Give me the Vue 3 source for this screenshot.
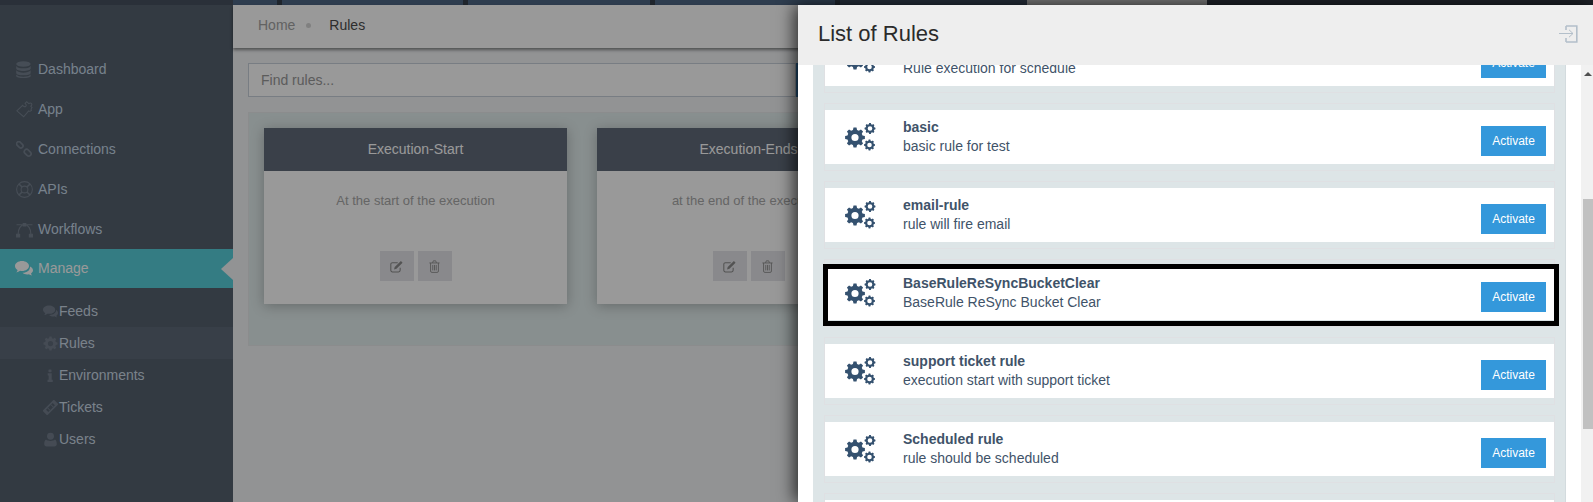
<script setup>
function gear(cx, cy, ro, ri, hole, teeth) {
  let d = ''
  const step = (Math.PI * 2) / teeth
  for (let i = 0; i < teeth; i++) {
    const a = i * step - Math.PI / 2
    const w = step * 0.24
    const pts = [
      [ri, a - step * 0.34],
      [ro, a - w * 0.8],
      [ro, a + w * 0.8],
      [ri, a + step * 0.34]
    ]
    for (const [r, t] of pts) {
      d += (d ? 'L' : 'M') + (cx + r * Math.cos(t)).toFixed(2) + ' ' + (cy + r * Math.sin(t)).toFixed(2)
    }
  }
  d += 'Z'
  d += `M${cx - hole} ${cy}a${hole} ${hole} 0 1 0 ${hole * 2} 0a${hole} ${hole} 0 1 0 ${-hole * 2} 0Z`
  return d
}

const cogs = gear(10, 14.5, 10, 7.8, 3.6, 8) + gear(25, 5.5, 5.5, 4.4, 2.3, 8) + gear(24.5, 22, 5.5, 4.4, 2.3, 8)
const ruleGear = gear(8, 8, 7.6, 5.9, 2.8, 8)

const mainNav = [
  { label: 'Dashboard', icon: 'database' },
  { label: 'App', icon: 'puzzle' },
  { label: 'Connections', icon: 'link' },
  { label: 'APIs', icon: 'ring' },
  { label: 'Workflows', icon: 'bezier' }
]
const subNav = [
  { label: 'Feeds', icon: 'comments' },
  { label: 'Rules', icon: 'gear', active: true },
  { label: 'Environments', icon: 'info' },
  { label: 'Tickets', icon: 'ticket' },
  { label: 'Users', icon: 'user' }
]
const execCards = [
  { title: 'Execution-Start', text: 'At the start of the execution' },
  { title: 'Execution-Ends', text: 'at the end of the execution' }
]
const rules = [
  { name: '', desc: 'Rule execution for schedule' },
  { name: 'basic', desc: 'basic rule for test' },
  { name: 'email-rule', desc: 'rule will fire email' },
  { name: 'BaseRuleReSyncBucketClear', desc: 'BaseRule ReSync Bucket Clear', marked: true },
  { name: 'support ticket rule', desc: 'execution start with support ticket' },
  { name: 'Scheduled rule', desc: 'rule should be scheduled' },
  { name: '', desc: '', empty: true }
]
const tabs = ['t-a', 't-b', 't-sep', 't-c', 't-sep', 't-d', 't-sep', 't-e', 't-sep', 't-f', 't-light', 't-g']
</script>

<template>
  <div class="page">
    <div class="strip">
      <span v-for="(t, i) in tabs" :key="i" :class="t"></span>
    </div>
    <div class="shell">
      <aside class="side">
        <nav class="main-nav">
          <a v-for="n in mainNav" :key="n.label" class="nav-row">
            <span class="nav-ico"><svg width="17" height="17" viewBox="0 0 16 16">
              <g v-if="n.icon === 'database'" fill="currentColor">
                <ellipse cx="7" cy="2.8" rx="6.8" ry="2.6" />
                <path d="M.2 4.6C1.4 6.3 4 6.9 7 6.9s5.600-.6 6.800-2.300V7C13.800 8.600 10.800 9.300 7 9.300S.2 8.600.2 7Z" />
                <path d="M.2 8.700C1.400 10.300 4 11 7 11s5.600-.7 6.800-2.300v2.500C13.800 12.800 10.800 13.500 7 13.500S.2 12.800.2 11.200Z" />
                <path d="M.2 12.700C1.400 14.100 4 14.800 7 14.800s5.600-.7 6.800-2.100V14c0 1.300-3 2-6.800 2S.2 15.300.2 14Z" />
              </g>
              <path v-else-if="n.icon === 'puzzle'" fill="none" stroke="currentColor" stroke-width="1" d="M.8 9.200 6.200 4c.9 1.400 2.300 1.700 3 1 .8-.8.400-1.900-.6-2.800l1.500-1.500 2 1.800c.9-.8 2-.7 2.500-.1.600.7.300 1.800-.7 2.500l1.200 1.400c-.9.700-1.200 1.800-.5 2.500-.8.900-2 1-2.700.6l-4.700 5.400Z" />
              <g v-else-if="n.icon === 'link'" fill="none" stroke="currentColor" stroke-width="1.600">
                <rect x="-3.400" y="-2" width="6.800" height="4" rx="2" transform="translate(3.600 3.600) rotate(45)" />
                <rect x="-3.600" y="-2.200" width="7.200" height="4.400" rx="2.200" transform="translate(11 11) rotate(45)" />
              </g>
              <g v-else-if="n.icon === 'ring'" fill="none" stroke="currentColor" stroke-width="1">
                <circle cx="8" cy="8" r="7.400" />
                <circle cx="8" cy="8" r="3.200" />
                <path stroke-width="1.500" d="M2.800 2.800l2.900 2.900M13.200 2.800l-2.900 2.900M2.800 13.200l2.900-2.900M13.200 13.200l-2.900-2.900" />
              </g>
              <g v-else fill="none" stroke="currentColor" stroke-width="1.100">
                <path d="M2 12.500C2 7 4.500 3.500 8 3.500s6 3.500 6 9M.5 3.500h15" />
                <path fill="currentColor" d="M.6 12.500h2.800v2.400H.6zM12.600 12.500h2.800v2.400h-2.800zM6.800 2.400h2.400v2.200H6.800z" />
              </g>
            </svg></span>
            <span>{{ n.label }}</span>
          </a>
          <a class="nav-row manage">
            <span class="nav-ico manage-ico"><svg width="18" height="16" viewBox="0 0 18 16" fill="currentColor">
              <path d="M7 1c3.900 0 7 2.200 7 5s-3.100 5-7 5c-.7 0-1.300-.1-1.900-.2C4 11.700 2.700 12.200 1.300 12.400c.7-.7 1.200-1.500 1.300-2.400C1 9.100 0 7.600 0 6c0-2.800 3.100-5 7-5Z" />
              <path d="M15 6.500c1.800.8 3 2.200 3 3.800 0 1.300-.8 2.400-2 3.200.100.800.500 1.500 1.100 2.100-1.200-.2-2.300-.6-3.300-1.300-.5.100-1 .2-1.600.2-1.900 0-3.600-.6-4.700-1.700 4.200.1 7.800-2.400 7.500-6.300Z" />
            </svg></span>
            <span>Manage</span>
            <i class="notch"></i>
          </a>
        </nav>
        <nav class="sub-nav">
          <a v-for="n in subNav" :key="n.label" class="sub-row" :class="{ on: n.active }">
            <span class="sub-ico"><svg width="15" height="15" viewBox="0 0 16 16">
              <g v-if="n.icon === 'comments'" fill="currentColor">
                <path d="M6.500 1.500c3.500 0 6.500 1.900 6.500 4.500s-3 4.500-6.500 4.500c-.6 0-1.200-.1-1.800-.2-1 .8-2.200 1.300-3.400 1.400.6-.7 1-1.400 1.100-2.200C.9 8.700 0 7.400 0 6c0-2.600 2.900-4.500 6.500-4.500Z" />
                <path d="M14 6.500c1.300.7 2 1.800 2 3 0 1.200-.7 2.200-1.800 2.900.1.700.4 1.400 1 1.900-1.100-.1-2.100-.6-3-1.200-2 .5-4.300 0-5.600-1.400 3.800.1 7.600-1.900 7.400-5.200Z" />
              </g>
              <path v-else-if="n.icon === 'gear'" fill="currentColor" fill-rule="evenodd" :d="ruleGear" />
              <g v-else-if="n.icon === 'info'" fill="currentColor">
                <rect x="5.800" y="1.500" width="3.300" height="3" rx=".7" />
                <path d="M5 5.500h4.300v7h1.100V15H4.800v-2.500H6V8H5Z" />
              </g>
              <g v-else-if="n.icon === 'ticket'" fill="currentColor" transform="rotate(-45 8 8)">
                <path fill-rule="evenodd" d="M-.5 4.500h17v7h-17ZM3 6.300v3.400h10V6.300Z" />
                <rect x="5" y="6.300" width="1" height="3.400" />
                <rect x="10" y="6.300" width="1" height="3.400" />
              </g>
              <g v-else fill="currentColor">
                <circle cx="8" cy="4.600" r="3.700" />
                <path d="M3.200 8c1.300 1.100 3 1.500 4.800 1.500s3.500-.4 4.800-1.500c1.300.8 1.900 2.500 1.900 4.800 0 1.700-1 2.700-2.600 2.700H3.900c-1.600 0-2.600-1-2.600-2.700 0-2.300.6-4 1.900-4.800Z" />
              </g>
            </svg></span>
            <span>{{ n.label }}</span>
          </a>
        </nav>
      </aside>
      <main class="content">
        <div class="crumbs">
          <span class="home">Home</span>
          <i class="dot"></i>
          <span class="cur">Rules</span>
        </div>
        <div class="search">
          <input class="find" placeholder="Find rules..." />
          <button class="go"></button>
        </div>
        <section class="board">
          <article v-for="c in execCards" :key="c.title" class="exec">
            <header class="exec-head">{{ c.title }}</header>
            <p class="exec-text">{{ c.text }}</p>
            <div class="exec-btns">
              <button class="tool"><svg width="13" height="13" viewBox="0 0 16 16" fill="none" stroke="currentColor" stroke-width="1.300">
                <path d="M12.500 9.500v3.200a2 2 0 0 1-2 2H3a2 2 0 0 1-2-2V5.300a2 2 0 0 1 2-2h6.500" />
                <path fill="currentColor" stroke="none" d="M13.400 1.200 15.500 3.300 8 10.800l-3 .8.800-3Z" />
              </svg></button>
              <button class="tool"><svg width="11" height="13" viewBox="0 0 14 16" fill="none" stroke="currentColor" stroke-width="1.100">
                <path d="M.5 3.500h13M2 3.500v10.300A1.700 1.700 0 0 0 3.700 15.500h6.600a1.700 1.700 0 0 0 1.700-1.700V3.500M4.500 3.500l1-2.700h3l1 2.700M4.800 6v7M7 6v7M9.200 6v7" />
              </svg></button>
            </div>
          </article>
        </section>
      </main>
    </div>
    <div class="veil"></div>
    <div class="panel">
      <header class="panel-head">
        <h2 class="panel-title">List of Rules</h2>
        <svg class="exit" width="19" height="18" viewBox="0 0 19 18" fill="none" stroke="#b3bfca">
          <path stroke-width="1.600" d="M7 1h10.800v16H7M7 1v4M7 13v4" />
          <path stroke-width="1" d="M0 8.500h14M10 4.800l4 3.700-4 3.700" />
        </svg>
      </header>
      <div class="panel-body">
        <div class="scroller">
          <ul class="rule-list">
            <li v-for="(r, i) in rules" :key="i" class="rule">
              <div class="rule-inner">
                <svg class="cogs" width="31" height="28" viewBox="0 0 31 28"><path fill="#34516f" fill-rule="evenodd" :d="cogs" /></svg>
                <div class="rule-text">
                  <div class="rule-name">{{ r.name }}</div>
                  <div class="rule-desc">{{ r.desc }}</div>
                </div>
                <button v-if="!r.empty" class="activate">Activate</button>
              </div>
              <i v-if="r.marked" class="mark"></i>
            </li>
          </ul>
        </div>
        <div class="scrollbar">
          <i class="arrow"></i>
          <i class="thumb"></i>
        </div>
      </div>
    </div>
  </div>
</template>

<style>
html, body { margin: 0; overflow: hidden; }
</style>

<style scoped>
.page {
  position: relative;
  width: 1593px;
  height: 502px;
  overflow: hidden;
  display: flex;
  flex-direction: column;
  font-family: "Liberation Sans", Arial, sans-serif;
  font-size: 14px;
  background: #f3f5f7;
}
.strip { display: flex; height: 5px; flex: none; }
.strip span { display: block; height: 5px; }
.t-a { width: 233px; background: #46505f; }
.t-b { width: 44px; background: #4e6684; }
.t-sep { width: 5px; background: #353f4b; }
.t-c { width: 181px; background: #4e6684; }
.t-d { width: 182px; background: #4e6684; }
.t-e { width: 180px; background: #4e6684; }
.t-f { width: 187px; background: #3f4e62; }
.t-light { width: 180px; background: #c8c8c8; }
.t-g { flex: 1; background: #323944; }

.shell { flex: 1; display: flex; min-height: 0; }
.side { width: 233px; flex: none; background: #55616e; padding-top: 44px; box-sizing: border-box; }
.nav-row {
  position: relative;
  display: flex;
  align-items: center;
  height: 40px;
  padding-left: 16px;
  color: #c6d8e8;
}
.nav-ico { width: 22px; flex: none; display: flex; color: #76818f; }
.manage { height: 39px; box-sizing: border-box; padding-bottom: 2px; background: #57cfdb; color: #fff; }
.manage-ico { color: #fff; margin-left: -1px; width: 23px; }
.notch {
  position: absolute;
  right: 0;
  top: 9px;
  width: 0;
  height: 0;
  border-top: 11px solid transparent;
  border-bottom: 11px solid transparent;
  border-right: 12px solid #f3f5f7;
}
.sub-nav { padding-top: 7px; }
.sub-row {
  display: flex;
  align-items: center;
  height: 32px;
  padding-left: 43px;
  color: #ccd9e6;
}
.sub-row.on { background: #5e6a78; }
.sub-ico { width: 16px; flex: none; display: flex; color: #737e8d; }

.content { flex: 1; min-width: 0; display: flex; flex-direction: column; }
.crumbs {
  height: 43px;
  flex: none;
  box-sizing: border-box;
  background: #fff;
  display: flex;
  align-items: center;
  padding: 0 0 3px 25px;
  box-shadow: 0 2px 3px rgba(0, 0, 0, .45);
  position: relative;
}
.home { color: #a3a3a3; }
.dot { width: 5px; height: 5px; border-radius: 50%; background: #d6d6d6; margin: 0 18px 0 11px; }
.cur { color: #4c4c4c; }
.search { display: flex; margin: 15px 0 0 15px; height: 34px; flex: none; }
.find {
  flex: none;
  width: 548px;
  box-sizing: border-box;
  border: 1px solid #c8d0da;
  background: #fff;
  padding: 0 12px;
  font: 14px "Liberation Sans", Arial, sans-serif;
  outline: none;
}
.find::placeholder { color: #999; opacity: 1; }
.go { flex: 1; border: 0; background: #3a7fb8; padding: 0; }
.board {
  margin: 15px 0 0 15px;
  height: 234px;
  box-sizing: border-box;
  flex: none;
  background: #e3eeee;
  border-top: 1px solid #e8eaec;
  border-bottom: 1px solid #e8eaec;
  border-left: 1px solid #e8eaec;
  padding: 15px;
  display: flex;
  gap: 30px;
}
.exec {
  width: 303px;
  height: 176px;
  flex: none;
  background: #fff;
  box-shadow: 0 2px 12px rgba(0, 0, 0, .25);
  display: flex;
  flex-direction: column;
}
.exec-head {
  height: 43px;
  flex: none;
  box-sizing: border-box;
  padding-bottom: 2px;
  display: flex;
  align-items: center;
  justify-content: center;
  background: #616b7b;
  color: #fff;
}
.exec-text { margin: 0; padding-top: 22px; text-align: center; font-size: 13px; line-height: 16px; color: #a8a8a8; }
.exec-btns { margin-top: 42px; display: flex; justify-content: center; gap: 4px; }
.tool {
  width: 34px;
  height: 30px;
  padding: 0;
  border: 0;
  background: #e5e5e9;
  color: #8a8a8a;
  display: flex;
  align-items: center;
  justify-content: center;
}
.veil { position: absolute; inset: 0; background: rgba(0, 0, 0, .4); }

.panel {
  position: absolute;
  left: 798px;
  right: 0;
  top: 5px;
  bottom: 0;
  background: #fff;
  box-shadow: -4px 0 16px rgba(0, 0, 0, .7);
  display: flex;
  flex-direction: column;
}
.panel-head {
  height: 60px;
  flex: none;
  background: #eee;
  display: flex;
  align-items: center;
  justify-content: space-between;
  padding: 0 15px 0 20px;
  position: relative;
  z-index: 1;
}
.panel-title { margin: 0; font-size: 22px; font-weight: 400; color: #2b2b2b; position: relative; top: -1px; }
.exit { position: relative; top: -1px; }
.panel-body { flex: 1; min-height: 0; display: flex; overflow: hidden; }
.scroller { flex: 1; min-width: 0; padding: 0 15px; }
.rule-list {
  list-style: none;
  margin: -40px 0 0;
  padding: 0 10px 0 11px;
  background: #dde5e7;
  border-right: 1px solid #d3dbde;
  box-sizing: border-box;
}
.rule {
  position: relative;
  height: 68px;
  box-sizing: border-box;
  margin-bottom: 10px;
  border: 1px solid #dfe0e3;
  padding: 6px 0;
}
.rule-inner {
  height: 54px;
  background: #fff;
  display: flex;
  align-items: center;
  padding: 0 8px 0 20px;
}
.cogs { flex: none; margin-right: 27px; }
.rule-text { flex: 1; min-width: 0; color: #3f5369; line-height: 19px; }
.rule-name { font-weight: 700; height: 19px; }
.rule-desc { height: 19px; }
.activate {
  width: 65px;
  height: 30px;
  margin-top: 8px;
  padding: 0;
  border: 0;
  background: #3498db;
  color: #fff;
  font: 12px "Liberation Sans", Arial, sans-serif;
}
.mark {
  position: absolute;
  left: -2px;
  right: -5px;
  top: 4px;
  height: 62px;
  box-sizing: border-box;
  border: 5px solid #000;
}
.scrollbar {
  width: 12px;
  flex: none;
  background: #f1f1f1;
  padding-left: 2px;
  box-sizing: border-box;
  display: flex;
  flex-direction: column;
}
.arrow {
  width: 0;
  height: 0;
  margin: 7px 0 0 1px;
  border-left: 4px solid transparent;
  border-right: 4px solid transparent;
  border-bottom: 4px solid #505050;
}
.thumb { display: block; height: 230px; margin-top: 123px; background: #c1c1c1; }
</style>
